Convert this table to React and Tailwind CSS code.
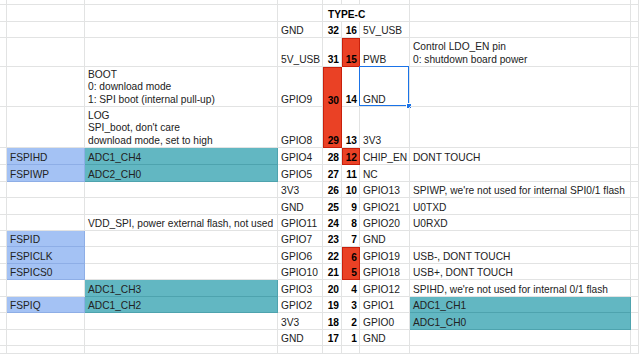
const GRID = 'grid grid-cols-[7px_78px_193px_45px_19px_18px_50px_221px_8px]'

const BLUE = 'bg-[#a4c2f4] border-r border-b border-[#8eaee6]'
const TEAL = 'bg-[#62b7c2] border-r border-b border-[#4ea3ae]'
const RED = 'bg-[#ea4125] border border-[#c8200c]'
const RED_TOP = 'bg-[#ea4125] border border-b-0 border-[#c8200c]'
const RED_BOT = 'bg-[#ea4125] border border-t-0 border-[#c8200c]'

// each row: height class + 9 cells (null = empty). cell: string or { t, cls, span, num, bold, sel }
const ROWS = [
  { h: 'h-[5px]', cells: [] },
  { h: 'h-[17px]', cells: [null, null, null, null, { t: 'TYPE-C', bold: true, span: 'col-span-3', pl: 'pl-[5px]' }, null, null, null] },
  { h: 'h-[16px]', cells: [null, null, null, 'GND', { t: '32', num: true }, { t: '16', num: true }, '5V_USB', null, null] },
  {
    h: 'h-[29px]',
    cells: [null, null, null, '5V_USB', { t: '31', num: true }, { t: '15', num: true, cls: RED }, 'PWB', 'Control LDO_EN pin\n0: shutdown board power', null],
  },
  {
    h: 'h-[40px]',
    cells: [
      null,
      null,
      'BOOT\n0: download mode\n1: SPI boot (internal pull-up)',
      'GPIO9',
      { t: '30', num: true, cls: RED_TOP },
      { t: '14', num: true },
      { t: 'GND', sel: true },
      null,
      null,
    ],
  },
  {
    h: 'h-[41px]',
    cells: [
      null,
      null,
      "LOG\nSPI_boot, don't care\ndownload mode, set to high",
      'GPIO8',
      { t: '29', num: true, cls: RED_BOT },
      { t: '13', num: true },
      '3V3',
      null,
      null,
    ],
  },
  {
    h: 'h-[17px]',
    cells: [null, { t: 'FSPIHD', cls: BLUE }, { t: 'ADC1_CH4', cls: TEAL }, 'GPIO4', { t: '28', num: true }, { t: '12', num: true, cls: RED }, 'CHIP_EN', 'DONT TOUCH', null],
  },
  {
    h: 'h-[17px]',
    cells: [null, { t: 'FSPIWP', cls: BLUE }, { t: 'ADC2_CH0', cls: TEAL }, 'GPIO5', { t: '27', num: true }, { t: '11', num: true }, 'NC', null, null],
  },
  {
    h: 'h-[16px]',
    cells: [null, null, null, '3V3', { t: '26', num: true }, { t: '10', num: true }, 'GPIO13', "SPIWP, we're not used for internal SPI0/1 flash", null],
  },
  { h: 'h-[17px]', cells: [null, null, null, 'GND', { t: '25', num: true }, { t: '9', num: true }, 'GPIO21', 'U0TXD', null] },
  {
    h: 'h-[16px]',
    cells: [null, null, 'VDD_SPI, power external flash, not used', 'GPIO11', { t: '24', num: true }, { t: '8', num: true }, 'GPIO20', 'U0RXD', null],
  },
  { h: 'h-[16px]', cells: [null, { t: 'FSPID', cls: BLUE }, null, 'GPIO7', { t: '23', num: true }, { t: '7', num: true }, 'GND', null, null] },
  {
    h: 'h-[17px]',
    cells: [null, { t: 'FSPICLK', cls: BLUE }, null, 'GPIO6', { t: '22', num: true }, { t: '6', num: true, cls: RED_TOP }, 'GPIO19', 'USB-, DONT TOUCH', null],
  },
  {
    h: 'h-[16px]',
    cells: [null, { t: 'FSPICS0', cls: BLUE }, null, 'GPIO10', { t: '21', num: true }, { t: '5', num: true, cls: RED_BOT }, 'GPIO18', 'USB+, DONT TOUCH', null],
  },
  {
    h: 'h-[17px]',
    cells: [null, null, { t: 'ADC1_CH3', cls: TEAL }, 'GPIO3', { t: '20', num: true }, { t: '4', num: true }, 'GPIO12', "SPIHD, we're not used for internal 0/1 flash", null],
  },
  {
    h: 'h-[16px]',
    cells: [null, { t: 'FSPIQ', cls: BLUE }, { t: 'ADC1_CH2', cls: TEAL }, 'GPIO2', { t: '19', num: true }, { t: '3', num: true }, 'GPIO1', { t: 'ADC1_CH1', cls: TEAL }, null],
  },
  { h: 'h-[17px]', cells: [null, null, null, '3V3', { t: '18', num: true }, { t: '2', num: true }, 'GPIO0', { t: 'ADC1_CH0', cls: TEAL }, null] },
  { h: 'h-[16px]', cells: [null, null, null, 'GND', { t: '17', num: true }, { t: '1', num: true }, 'GND', null, null] },
  { h: 'h-[8px]', cells: [] },
]

function Cell({ cell }) {
  const c = typeof cell === 'string' ? { t: cell } : cell || {}
  const base = c.cls || 'border-r border-b border-[#e2e3e3]'
  return (
    <div
      className={`relative flex items-end overflow-visible whitespace-pre leading-[12.3px] ${c.span || ''} ${base} ${
        c.num ? 'justify-end pr-[2px] font-bold text-black' : c.pl || 'pl-[3px]'
      } ${c.bold ? 'font-bold text-black' : ''}`}
    >
      {c.t}
      {c.sel && (
        <>
          <span className="absolute -left-[1px] -top-[1px] right-0 bottom-0 border border-[#1a73e8]" />
          <span className="absolute -right-[3px] -bottom-[3px] w-[6px] h-[6px] bg-[#1a73e8] border border-white" />
        </>
      )}
    </div>
  )
}

export default function App() {
  return (
    <div className="w-[639px] h-[354px] overflow-hidden bg-white text-[#222] text-[10.2px] font-['Liberation_Sans',Arial,sans-serif]">
      {ROWS.map((row, i) => {
        const cells = []
        let skip = 0
        for (let j = 0; j < 9; j++) {
          if (skip > 0) {
            skip--
            continue
          }
          const cell = row.cells[j]
          if (cell && cell.span === 'col-span-3') skip = 2
          cells.push(<Cell key={j} cell={cell} />)
        }
        return (
          <div key={i} className={`${GRID} ${row.h}`}>
            {cells}
          </div>
        )
      })}
    </div>
  )
}
